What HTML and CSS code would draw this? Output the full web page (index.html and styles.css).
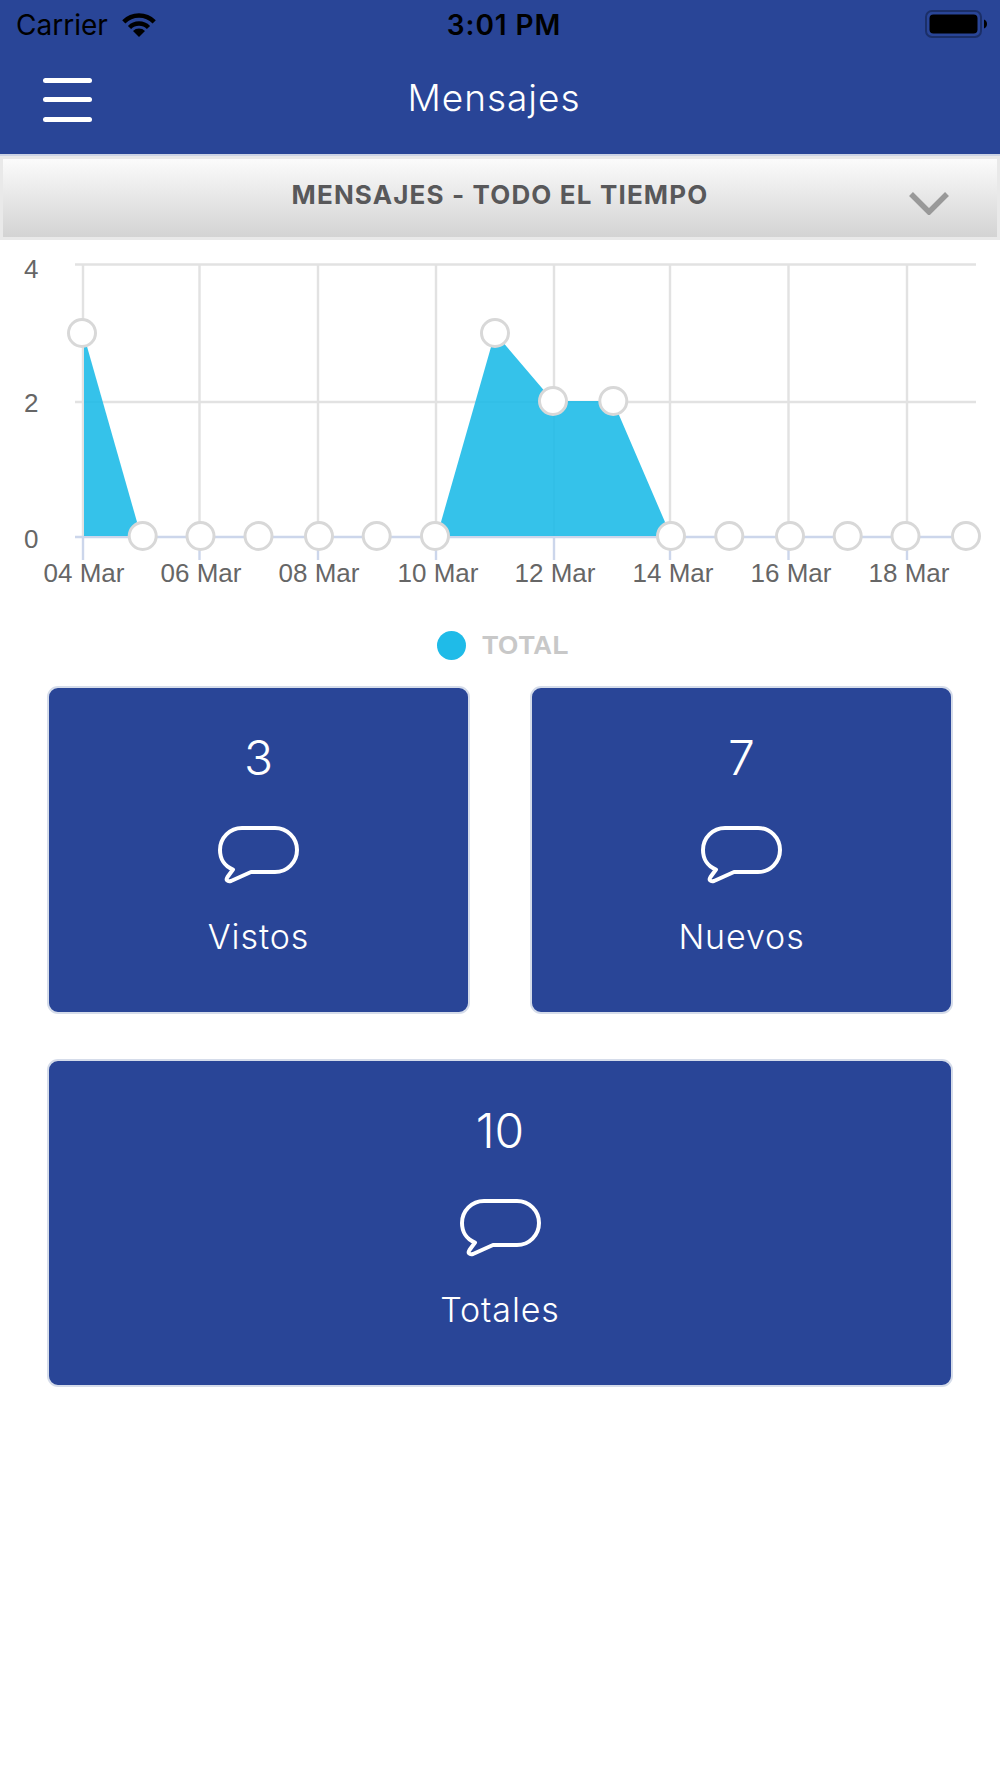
FILE: index.html
```html
<!DOCTYPE html>
<html lang="es">
<head>
<meta charset="utf-8">
<title>Mensajes</title>
<link rel="stylesheet" href="styles.css">
</head>
<body>
<header class="top">
  <div class="status">
    <div class="status-left">
      <span class="carrier">Carrier</span>
      <svg class="wifi" viewBox="121 12 34 24" width="34" height="24"><path class="wifi-arc" d="M122.8 20.8A21.5 21.5 0 0 1 153.2 20.8"/><path class="wifi-arc" d="M128.5 26.5A13.5 13.5 0 0 1 147.5 26.5"/><path class="wifi-dot" d="M138 36L132 30A8.5 8.5 0 0 1 144 30Z"/></svg>
    </div>
    <span class="time">3:01 PM</span>
    <svg class="battery" viewBox="0 0 63 28" width="63" height="28"><rect class="batt-shell" x="1" y="1" width="55" height="26" rx="6"/><rect class="batt-fill" x="4.500" y="4.500" width="48" height="19" rx="4"/><path class="batt-fill" d="M59 9.500c2 .5 3 2.500 3 4.500s-1 4-3 4.500z"/></svg>
  </div>
  <nav class="nav">
    <button class="burger" aria-label="Menu"><span></span><span></span><span></span></button>
    <h1 class="title">Mensajes</h1>
  </nav>
</header>

<div class="filter">
  <span class="filter-text">MENSAJES - TODO EL TIEMPO</span>
  <svg class="chevron" viewBox="0 0 40 24" width="40" height="24"><path d="M2 3L20 21L38 3"/></svg>
</div>

<svg class="chart" viewBox="0 240 1000 390" width="1000" height="390">
  <g class="grid">
    <path d="M75 264.500H976M75 402H976"/>
    <path d="M83 265V537M199.500 265V537M318 265V537M436 265V537M554 265V537M670 265V537M788.500 265V537M907 265V537"/>
  </g>
  <g class="axis">
    <path d="M75 537H976"/>
    <path d="M83 537V560M199.500 537V560M318 537V560M436 537V560M554 537V560M670 537V560M788.500 537V560M907 537V560"/>
  </g>
  <polygon class="area" points="84,336 84,536 141,536"/>
  <polygon class="area" points="437,536 495,333 553,401 613,401 671,536"/>
  <g class="points">
    <circle cx="82" cy="333" r="13.500"/>
    <circle cx="142.700" cy="536" r="13.500"/>
    <circle cx="200.500" cy="536" r="13.500"/>
    <circle cx="258.500" cy="536" r="13.500"/>
    <circle cx="319" cy="536" r="13.500"/>
    <circle cx="376.700" cy="536" r="13.500"/>
    <circle cx="435" cy="536" r="13.500"/>
    <circle cx="495" cy="333" r="13.500"/>
    <circle cx="553" cy="401" r="13.500"/>
    <circle cx="613.300" cy="401" r="13.500"/>
    <circle cx="671" cy="536" r="13.500"/>
    <circle cx="729.300" cy="536" r="13.500"/>
    <circle cx="790" cy="536" r="13.500"/>
    <circle cx="847.700" cy="536" r="13.500"/>
    <circle cx="905.500" cy="536" r="13.500"/>
    <circle cx="966" cy="536" r="13.500"/>
  </g>
  <g class="labels">
    <text x="24" y="278">4</text>
    <text x="24" y="412">2</text>
    <text x="24" y="548">0</text>
    <text class="x" x="84" y="582">04 Mar</text>
    <text class="x" x="201" y="582">06 Mar</text>
    <text class="x" x="319" y="582">08 Mar</text>
    <text class="x" x="438" y="582">10 Mar</text>
    <text class="x" x="555" y="582">12 Mar</text>
    <text class="x" x="673" y="582">14 Mar</text>
    <text class="x" x="791" y="582">16 Mar</text>
    <text class="x" x="909" y="582">18 Mar</text>
  </g>
</svg>

<div class="legend"><span class="legend-dot"></span><span class="legend-text">TOTAL</span></div>

<main class="cards">
  <section class="card">
    <div class="card-num">3</div>
    <svg class="bubble" viewBox="0 0 81 58" width="81" height="58"><path d="M24 2H57A22 22 0 0 1 57 46H33L13 55C9.500 56 7.500 54 9.500 51L15 43.500C6 40 2 32 2 24A22 22 0 0 1 24 2Z"/></svg>
    <div class="card-label">Vistos</div>
  </section>
  <section class="card">
    <div class="card-num">7</div>
    <svg class="bubble" viewBox="0 0 81 58" width="81" height="58"><path d="M24 2H57A22 22 0 0 1 57 46H33L13 55C9.500 56 7.500 54 9.500 51L15 43.500C6 40 2 32 2 24A22 22 0 0 1 24 2Z"/></svg>
    <div class="card-label">Nuevos</div>
  </section>
  <section class="card card-wide">
    <div class="card-num">10</div>
    <svg class="bubble" viewBox="0 0 81 58" width="81" height="58"><path d="M24 2H57A22 22 0 0 1 57 46H33L13 55C9.500 56 7.500 54 9.500 51L15 43.500C6 40 2 32 2 24A22 22 0 0 1 24 2Z"/></svg>
    <div class="card-label">Totales</div>
  </section>
</main>
</body>
</html>
```
FILE: styles.css
```css
* { box-sizing: border-box; }
html, body { margin: 0; padding: 0; background: #fff; }
body { width: 1000px; height: 1778px; overflow: hidden; font-family: "Inter", "Liberation Sans", sans-serif; }

.top { background: #294597; height: 156px; border-bottom: 2px solid #ccd3e4; }
.status { height: 50px; display: grid; grid-template-columns: 1fr auto 1fr; align-items: center; padding: 0 12px 0 16px; color: #000; }
.status-left { display: flex; align-items: center; gap: 14px; }
.carrier { font-size: 28px; line-height: 50px; }
.time { font-size: 28px; font-weight: 600; line-height: 50px; padding-left: 4px; letter-spacing: .9px; }
.battery { justify-self: end; margin-top: -2px; }
.batt-shell { fill: none; stroke: #1b2f68; stroke-width: 2; }
.batt-fill { fill: #000; }
.wifi-arc { fill: none; stroke: #000; stroke-width: 4.500; }
.wifi-dot { fill: #000; }

.nav { height: 104px; display: flex; align-items: center; padding: 0 104px 8px 43px; }
.burger { width: 49px; margin-top: 3px; padding: 0; border: 0; background: none; display: flex; flex-direction: column; gap: 14.500px; }
.burger span { display: block; height: 5px; border-radius: 3px; background: #fff; }
.title { flex: 1; margin: 0; text-align: center; color: #fff; font-size: 37px; font-weight: 300; line-height: 44px; letter-spacing: 1px; }

.filter { position: relative; height: 84px; border: 3px solid #e9e9e9; background: linear-gradient(#fbfbfb, #d3d3d3); display: flex; align-items: center; justify-content: center; padding-bottom: 8px; }
.filter-text { color: #58585a; font-size: 26px; font-weight: 700; letter-spacing: 1.15px; }
.chevron { position: absolute; right: 48px; top: 32px; }
.chevron path { fill: none; stroke: #999; stroke-width: 5.500; }

.chart { display: block; }
.grid path { fill: none; stroke: #e2e2e2; stroke-width: 2.400; }
.axis path { fill: none; stroke: #ccd6eb; stroke-width: 2.400; }
.area { fill: #1fbbe8; fill-opacity: .9; }
.points circle { fill: #fff; stroke: #d8d8d8; stroke-width: 3; }
.labels text { font-family: "Liberation Sans", Arial, sans-serif; font-size: 26px; fill: #666; }
.labels .x { text-anchor: middle; }

.legend { display: flex; align-items: center; justify-content: center; gap: 16px; height: 30px; padding-left: 6px; }
.legend-dot { width: 29px; height: 29px; border-radius: 50%; background: #1fbbe8; }
.legend-text { font-family: "Liberation Sans", Arial, sans-serif; font-weight: 700; font-size: 26px; letter-spacing: .5px; color: #c8c8c8; }

.cards { display: grid; grid-template-columns: 423px 423px; column-gap: 60px; row-gap: 45px; padding: 26px 47px 0; }
.card { height: 328px; background: #294597; border: 2px solid #d5dcea; border-radius: 11px; color: #fff; display: flex; flex-direction: column; align-items: center; padding-top: 40px; }
.card-wide { grid-column: 1 / -1; }
.card-num { font-size: 48px; font-weight: 300; line-height: 60px; }
.bubble { margin-top: 38px; display: block; }
.bubble path { fill: none; stroke: #fff; stroke-width: 4; stroke-linejoin: round; }
.card-label { font-size: 34px; font-weight: 300; line-height: 44px; margin-top: 31px; letter-spacing: .9px; }
```
